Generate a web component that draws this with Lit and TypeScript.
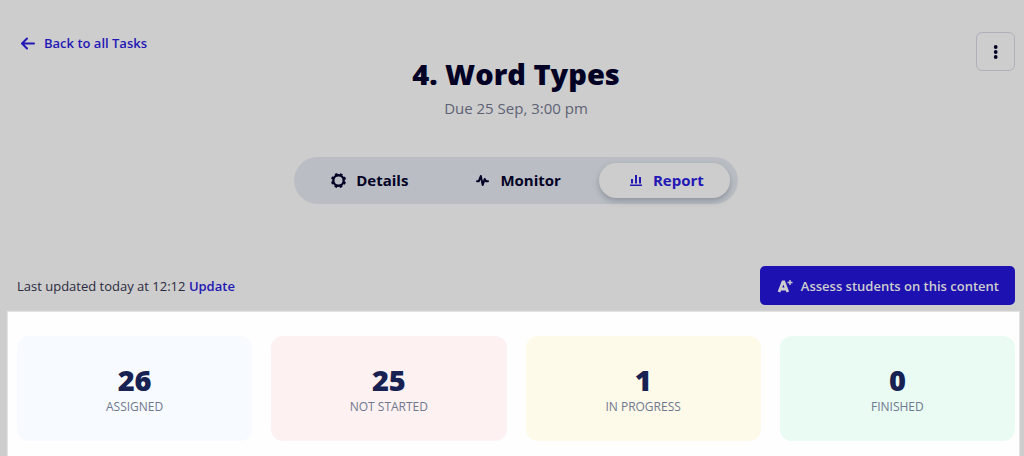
import { LitElement, html, css, svg } from "lit";
import { customElement, property, state } from "lit/decorators.js";
import { classMap } from "lit/directives/class-map.js";

const icons = {
  back: svg`<svg width="16" height="16" viewBox="0 0 16 16" fill="none" stroke="currentColor" stroke-width="2" stroke-linecap="round" stroke-linejoin="round"><path d="M14 8.500H2.500M7 3.500l-5 5 5 5"/></svg>`,
  more: svg`<svg width="16" height="16" viewBox="0 0 16 16" fill="currentColor"><circle cx="7.700" cy="3" r="1.900"/><circle cx="7.700" cy="8" r="1.900"/><circle cx="7.700" cy="13" r="1.900"/></svg>`,
  details: svg`<svg width="16" height="16" viewBox="0 0 16 16" fill="none" stroke="currentColor"><circle cx="8.500" cy="8.500" r="5.200" stroke-width="2.400"/><circle cx="8.500" cy="8.500" r="6.700" stroke-width="1.700" stroke-dasharray="2.662 2.600" stroke-dashoffset="-1.300"/></svg>`,
  monitor: svg`<svg width="16" height="16" viewBox="0 0 16 16" fill="none" stroke="currentColor" stroke-width="2" stroke-linecap="round" stroke-linejoin="round"><path d="M3 9.300h1.700L6.800 4 8.700 13l2-6 1.300 2.300H14"/></svg>`,
  report: svg`<svg width="16" height="16" viewBox="0 0 16 16" fill="currentColor"><path d="M3 12.500h12V14H3zM4 7h2v4.500H4zM8 3h2v8.500H8zM12 5h2v6.500h-2z"/></svg>`,
  grade: svg`<svg width="16" height="16" viewBox="0 0 16 16" fill="none" stroke="currentColor"><path d="M2 14 5.900 4h1L10.800 14M4 11h5" stroke-width="2.800"/><path d="M13 2v5M10.500 4.500h5" stroke-width="1.400"/></svg>`,
};

@customElement("task-stat")
export class TaskStat extends LitElement {
  @property() label = "";
  @property({ type: Number }) value = 0;

  static styles = css`
    :host {
      display: flex;
      flex-direction: column;
      align-items: center;
      padding: 27px 12px 24px;
      border-radius: 12px;
      color: #172152;
    }
    .value { font-size: 29px; line-height: 34px; font-weight: 800; }
    .label { font-size: 12px; line-height: 20px; color: #6f788e; text-transform: uppercase; }
  `;

  render() {
    return html`<span class="value">${this.value}</span><span class="label">${this.label}</span>`;
  }
}

@customElement("app-root")
export class AppRoot extends LitElement {
  @state() private tab = "report";

  static styles = css`
    :host {
      display: flex;
      flex-direction: column;
      box-sizing: border-box;
      min-height: 100vh;
      background: #cdcdcd;
      color: #030225;
      font-family: "Open Sans", "Noto Sans", sans-serif;
      font-size: 13px;
      line-height: 20px;
    }
    svg { display: block; flex: none; }
    button { font: inherit; color: inherit; border: 0; background: none; cursor: pointer; }
    a { color: #2317b5; font-weight: 600; text-decoration: none; }
    .header {
      display: grid;
      grid-template-columns: 1fr auto 1fr;
      align-items: start;
      padding: 32px 9px 0 17px;
    }
    .back { display: flex; align-items: center; gap: 8px; padding: 1px 3px; }
    .heading { text-align: center; padding-top: 23px; }
    .title { margin: 0; font-size: 29px; line-height: 38px; font-weight: 800; }
    .due { margin: 4px 0 0; font-size: 15px; line-height: 22px; color: #5d6275; }
    .more {
      display: grid;
      place-items: center;
      justify-self: end;
      width: 39px;
      height: 39px;
      padding: 0;
      border: 1px solid #aeb0bc;
      border-radius: 6px;
    }
    .tabs {
      display: flex;
      align-self: center;
      gap: 12px;
      margin: 38px 0 0 8px;
      padding: 6px 8px;
      border-radius: 24px;
      background: #babec4;
    }
    .tab {
      display: flex;
      align-items: center;
      justify-content: center;
      gap: 10px;
      height: 35px;
      padding: 0 26px 1px 28px;
      border-radius: 18px;
      font-size: 15px;
      font-weight: 700;
    }
    .tab.active { background: #cdcdcd; color: #2317b5; box-shadow: 0 3px 6px rgb(60 70 85 / 0.35); }
    .toolbar {
      display: flex;
      align-items: center;
      justify-content: space-between;
      padding: 62px 9px 7px 17px;
    }
    .updated { margin: 0; color: #2b2a3f; }
    .assess {
      display: flex;
      align-items: center;
      gap: 8px;
      height: 39px;
      padding: 0 16px 0 17px;
      border-radius: 5px;
      background: #1d12b1;
      color: #cdcdcd;
      font-weight: 600;
    }
    .stats {
      display: grid;
      grid-template-columns: repeat(4, 1fr);
      align-items: start;
      gap: 19px;
      flex: 1;
      margin: 0 5px 0 8px;
      padding: 24px 4px 15px 9px;
      background: #fefefe;
      box-shadow: 0 0 1px 1px #e2e2e2;
    }
    .assigned { background: #f7fbff; }
    .pending { background: #fdf1f1; }
    .progress { background: #fdfaea; }
    .finished { background: #e9fbf3; }
  `;

  private tabButton(id: "details" | "monitor" | "report", label: string) {
    const active = this.tab === id;
    return html`<button
      class=${classMap({ tab: true, active })}
      role="tab"
      aria-selected=${active ? "true" : "false"}
      @click=${() => (this.tab = id)}
    >${icons[id]}<span>${label}</span></button>`;
  }

  render() {
    return html`
      <header class="header">
        <div><a class="back" href="#tasks">${icons.back}<span>Back to all Tasks</span></a></div>
        <div class="heading">
          <h1 class="title">4. Word Types</h1>
          <p class="due">Due 25 Sep, 3:00 pm</p>
        </div>
        <button class="more" aria-label="More options">${icons.more}</button>
      </header>
      <div class="tabs" role="tablist">
        ${this.tabButton("details", "Details")}
        ${this.tabButton("monitor", "Monitor")}
        ${this.tabButton("report", "Report")}
      </div>
      <div class="toolbar">
        <p class="updated">Last updated today at 12:12 <a href="#update">Update</a></p>
        <button class="assess">${icons.grade}<span>Assess students on this content</span></button>
      </div>
      <section class="stats">
        <task-stat class="assigned" .value=${26} label="Assigned"></task-stat>
        <task-stat class="pending" .value=${25} label="Not started"></task-stat>
        <task-stat class="progress" .value=${1} label="In progress"></task-stat>
        <task-stat class="finished" .value=${0} label="Finished"></task-stat>
      </section>
    `;
  }
}
